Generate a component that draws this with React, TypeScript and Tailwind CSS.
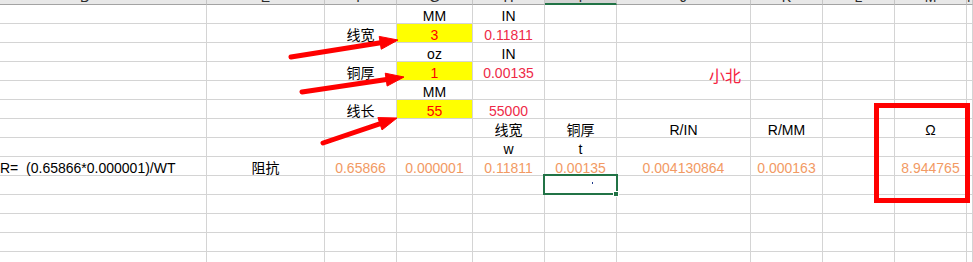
import React from "react";

type Kind = "n" | "y" | "h" | "o" | "l";
type Cell = { t?: string; k?: Kind };

const headers = ["D", "E", "F", "G", "H", "I", "J", "K", "L", "M", "N"];

const E: Cell = {};

const rows: Cell[][] = [
  [E, E, E, { t: "MM" }, { t: "IN" }, E, E, E, E, E, E],
  [E, E, { t: "线宽" }, { t: "3", k: "y" }, { t: "0.11811", k: "h" }, E, E, E, E, E, E],
  [E, E, E, { t: "oz" }, { t: "IN" }, E, E, E, E, E, E],
  [E, E, { t: "铜厚" }, { t: "1", k: "y" }, { t: "0.00135", k: "h" }, E, E, E, E, E, E],
  [E, E, E, { t: "MM" }, E, E, E, E, E, E, E],
  [E, E, { t: "线长" }, { t: "55", k: "y" }, { t: "55000", k: "h" }, E, E, E, E, E, E],
  [E, E, E, E, { t: "线宽" }, { t: "铜厚" }, { t: "R/IN" }, { t: "R/MM" }, E, { t: "Ω" }, E],
  [E, E, E, E, { t: "w" }, { t: "t" }, E, E, E, E, E],
  [
    { t: "R=  (0.65866*0.000001)/WT", k: "l" },
    { t: "阻抗" },
    { t: "0.65866", k: "o" },
    { t: "0.000001", k: "o" },
    { t: "0.11811", k: "o" },
    { t: "0.00135", k: "o" },
    { t: "0.004130864", k: "o" },
    { t: "0.000163", k: "o" },
    E,
    { t: "8.944765", k: "o" },
    E,
  ],
  [E, E, E, E, E, E, E, E, E, E, E],
  [E, E, E, E, E, E, E, E, E, E, E],
  [E, E, E, E, E, E, E, E, E, E, E],
  [E, E, E, E, E, E, E, E, E, E, E],
  [E, E, E, E, E, E, E, E, E, E, E],
];

function cellClass(k?: Kind) {
  switch (k) {
    case "y":
      return "justify-center bg-[#ffff00] text-[#ff0000]";
    case "h":
      return "justify-center text-[#ee2a48]";
    case "o":
      return "justify-center text-[#f29a64]";
    case "l":
      return "justify-start text-black";
    default:
      return "justify-center text-black";
  }
}

function Arrow({ x1, y1, x2, y2 }: { x1: number; y1: number; x2: number; y2: number }) {
  const dx = x2 - x1;
  const dy = y2 - y1;
  const len = Math.sqrt(dx * dx + dy * dy);
  const ux = dx / len;
  const uy = dy / len;
  const bx = x2 - ux * 18;
  const by = y2 - uy * 18;
  const px = -uy * 6.5;
  const py = ux * 6.5;
  return (
    <g fill="#ff0000" stroke="#ff0000">
      <line x1={x1} y1={y1} x2={bx + ux * 2} y2={by + uy * 2} strokeWidth={5} strokeLinecap="round" />
      <polygon
        points={`${x2},${y2} ${bx + px},${by + py} ${bx - px},${by - py}`}
        strokeWidth={1}
        strokeLinejoin="round"
      />
    </g>
  );
}

export default function App() {
  return (
    <div
      className="relative w-[973px] h-[262px] overflow-hidden bg-white"
      style={{ fontFamily: '"Liberation Sans", "Noto Sans CJK SC", Arial, sans-serif' }}
    >
      <div className="grid grid-cols-[207px_118px_72px_76px_72px_72px_134px_72px_72px_72px_6px]">
        {headers.map((h, i) => (
          <div
            key={h}
            className={
              h === "I"
                ? "h-[5px] overflow-hidden bg-[#d3d3d3] border-r border-r-[#c6c6c6] border-b-2 border-b-[#217346]"
                : "h-[5px] overflow-hidden bg-[#e8e8e8] border-r border-r-[#c6c6c6] border-b border-b-[#a3a3a3]"
            }
          >
            <div
              className={
                i === 0
                  ? "mt-[-10px] pr-[36px] text-center text-[14px] leading-[14px] text-[#2b2b2b]"
                  : "mt-[-10px] text-center text-[14px] leading-[14px] text-[#2b2b2b]"
              }
            >
              {h}
            </div>
          </div>
        ))}

        {rows.map((row, r) =>
          row.map((c, ci) => (
            <div
              key={`${r}-${ci}`}
              className={`flex h-[19px] items-end border-r border-b border-[#d4d4d4] text-[14px] leading-[14px] whitespace-pre ${cellClass(c.k)}`}
            >
              {c.t}
            </div>
          ))
        )}
      </div>

      {/* 小北 text box */}
      <div className="absolute left-[709px] top-[69px] text-[16px] leading-[16px] text-[#f5213e]">小北</div>

      {/* selected cell */}
      <div className="absolute left-[543px] top-[174px] w-[75px] h-[21px] border-2 border-[#217346]">
        <span className="absolute left-[47px] top-[6px] w-[1px] h-[2px] bg-[#1f3a8a]" />
      </div>
      <div className="absolute left-[613px] top-[191px] w-[6px] h-[6px] bg-[#217346] border border-white" />

      {/* red box */}
      <div className="absolute left-[874px] top-[103px] w-[96px] h-[100px] border-[5px] border-[#ff0000]" />

      <svg className="absolute left-0 top-0" width={973} height={262}>
        <Arrow x1={291} y1={57} x2={398} y2={40} />
        <Arrow x1={302} y1={92} x2={404} y2={77} />
        <Arrow x1={323} y1={143} x2={397} y2={118} />
      </svg>
    </div>
  );
}
